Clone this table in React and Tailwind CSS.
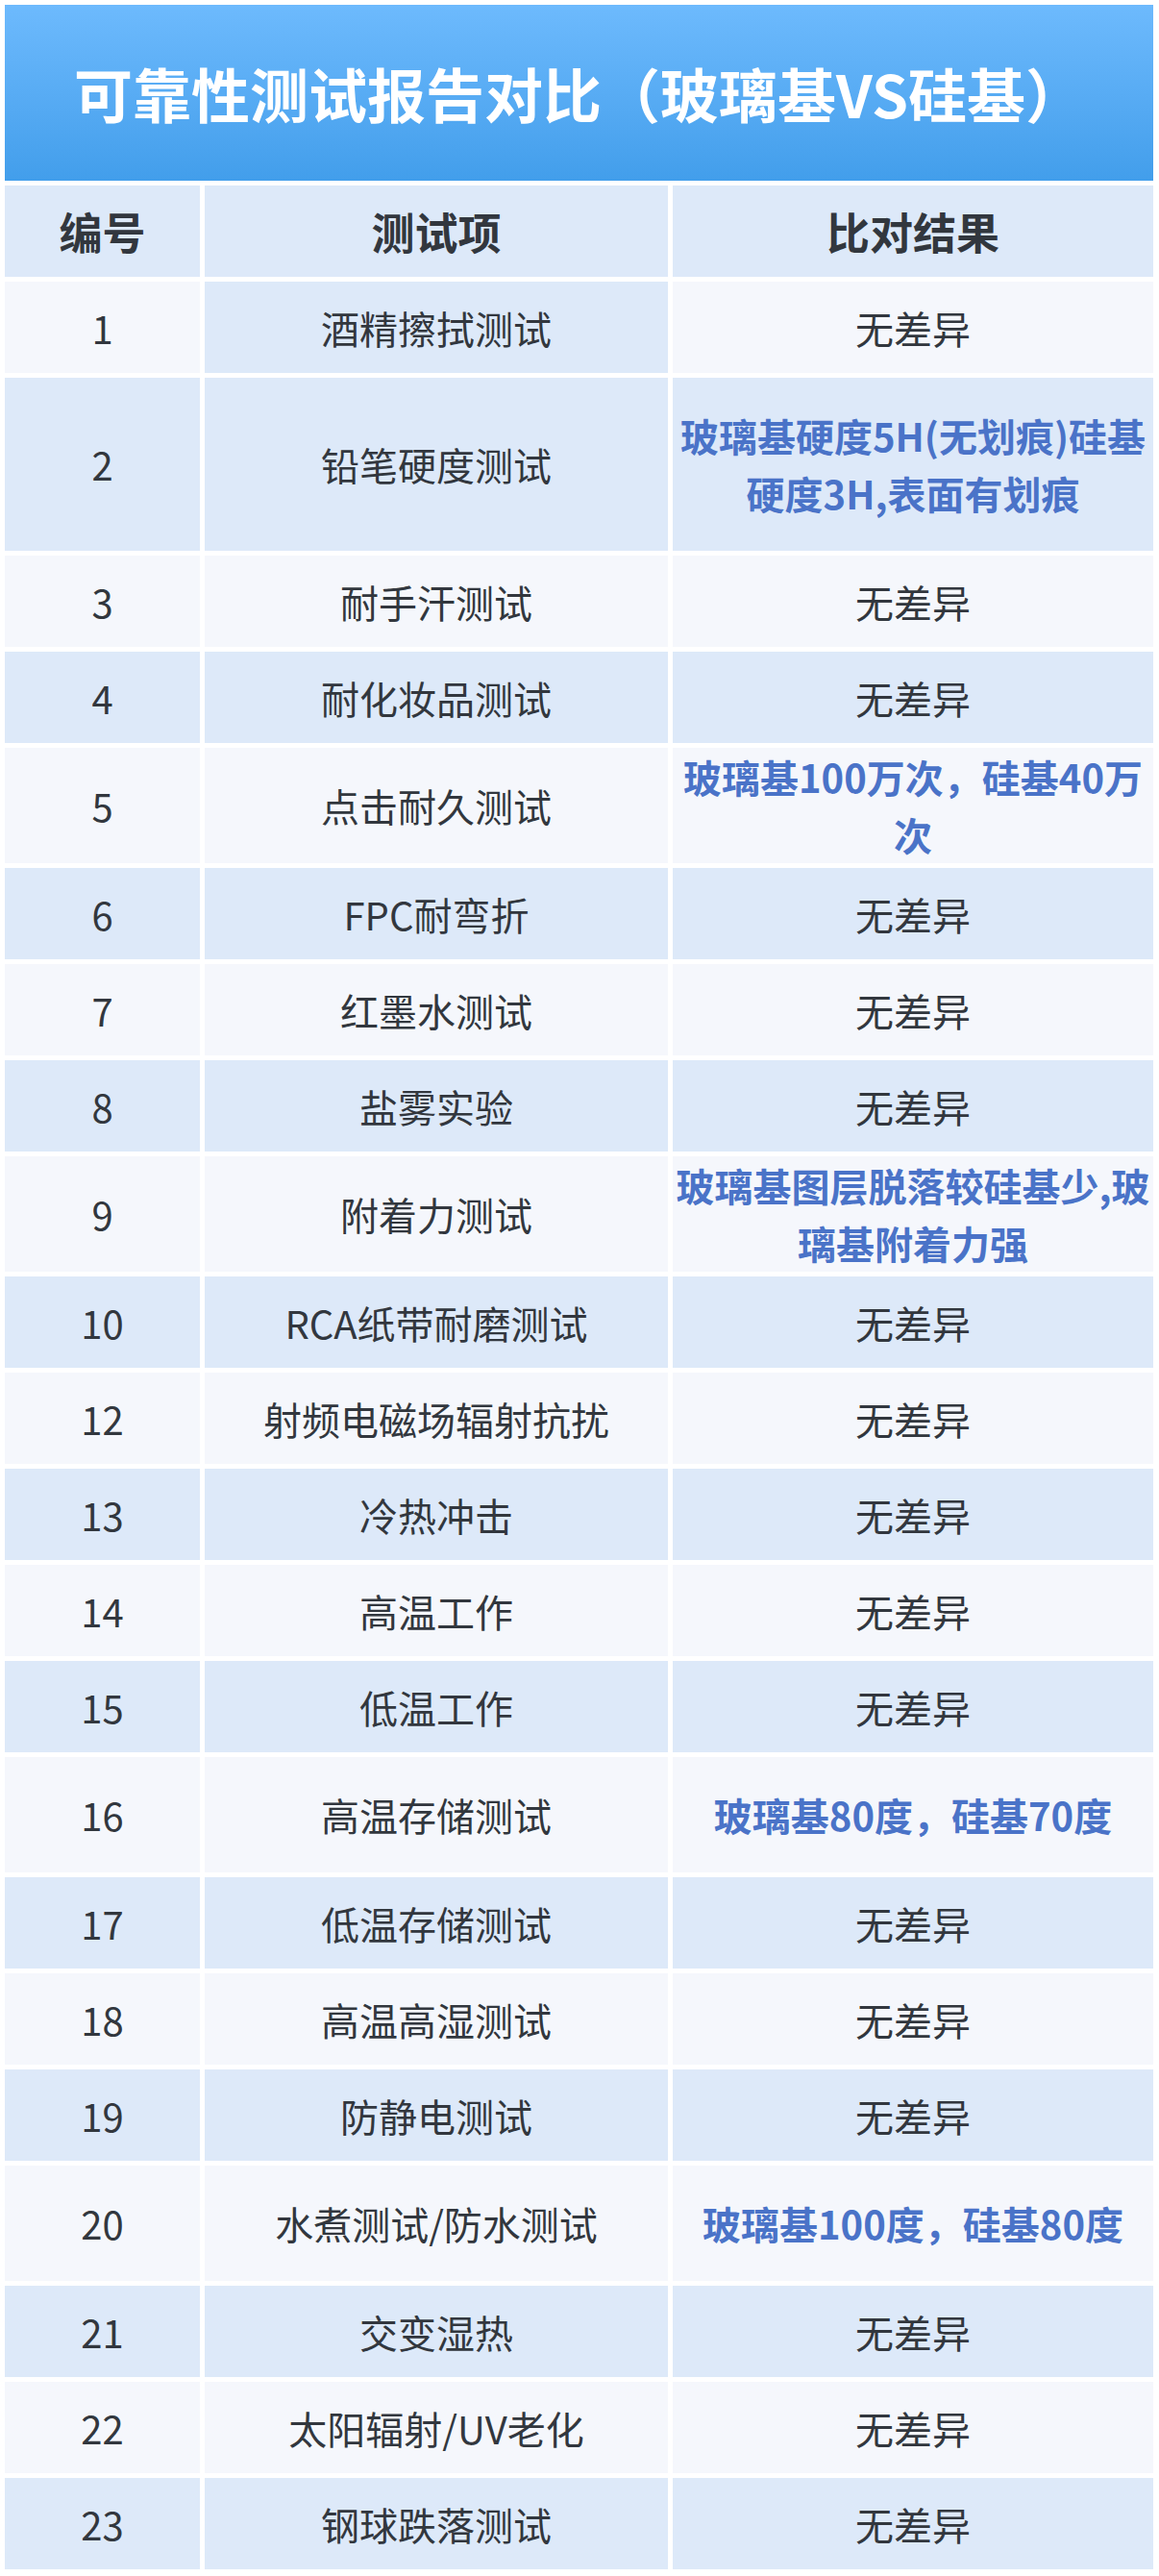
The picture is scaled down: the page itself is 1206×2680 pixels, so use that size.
const rows = [
  { n: "1", item: "酒精擦拭测试", res: ["无差异"], h: "h-[95px]", bg: "gray", midBlue: true },
  { n: "2", item: "铅笔硬度测试", res: ["玻璃基硬度5H(无划痕)硅基", "硬度3H,表面有划痕"], h: "h-[180px]", bg: "blue", hl: true },
  { n: "3", item: "耐手汗测试", res: ["无差异"], h: "h-[95px]", bg: "gray" },
  { n: "4", item: "耐化妆品测试", res: ["无差异"], h: "h-[95px]", bg: "blue" },
  { n: "5", item: "点击耐久测试", res: ["玻璃基100万次，硅基40万", "次"], h: "h-[120px]", bg: "gray", hl: true },
  { n: "6", item: "FPC耐弯折", res: ["无差异"], h: "h-[95px]", bg: "blue" },
  { n: "7", item: "红墨水测试", res: ["无差异"], h: "h-[95px]", bg: "gray" },
  { n: "8", item: "盐雾实验", res: ["无差异"], h: "h-[95px]", bg: "blue" },
  { n: "9", item: "附着力测试", res: ["玻璃基图层脱落较硅基少,玻", "璃基附着力强"], h: "h-[120px]", bg: "gray", hl: true },
  { n: "10", item: "RCA纸带耐磨测试", res: ["无差异"], h: "h-[95px]", bg: "blue" },
  { n: "12", item: "射频电磁场辐射抗扰", res: ["无差异"], h: "h-[95px]", bg: "gray" },
  { n: "13", item: "冷热冲击", res: ["无差异"], h: "h-[95px]", bg: "blue" },
  { n: "14", item: "高温工作", res: ["无差异"], h: "h-[95px]", bg: "gray" },
  { n: "15", item: "低温工作", res: ["无差异"], h: "h-[95px]", bg: "blue" },
  { n: "16", item: "高温存储测试", res: ["玻璃基80度，硅基70度"], h: "h-[120px]", bg: "gray", hl: true },
  { n: "17", item: "低温存储测试", res: ["无差异"], h: "h-[95px]", bg: "blue" },
  { n: "18", item: "高温高湿测试", res: ["无差异"], h: "h-[95px]", bg: "gray" },
  { n: "19", item: "防静电测试", res: ["无差异"], h: "h-[95px]", bg: "blue" },
  { n: "20", item: "水煮测试/防水测试", res: ["玻璃基100度，硅基80度"], h: "h-[120px]", bg: "gray", hl: true },
  { n: "21", item: "交变湿热", res: ["无差异"], h: "h-[95px]", bg: "blue" },
  { n: "22", item: "太阳辐射/UV老化", res: ["无差异"], h: "h-[95px]", bg: "gray" },
  { n: "23", item: "钢球跌落测试", res: ["无差异"], h: "h-[95px]", bg: "blue" },
];

const BLUE = "bg-[#dde9f9]";
const GRAY = "bg-[#f5f7fc]";

function Cell({ children, bg, h, className = "" }) {
  return (
    <div className={`${bg} ${h} flex flex-col items-center justify-center text-center ${className}`}>
      {children}
    </div>
  );
}

export default function App() {
  return (
    <div className="w-[1206px] min-h-[2680px] bg-white pt-[5px] pl-[5px] pr-[6px] font-['Noto_Sans_CJK_SC','Noto_Sans',sans-serif]">
      <div className="h-[183px] flex items-center justify-center bg-gradient-to-b from-[#6dbafd] to-[#429eeb]">
        <h1 className="text-white font-bold text-[61px] leading-none whitespace-nowrap">
          可靠性测试报告对比（玻璃基VS硅基）
        </h1>
      </div>
      <div className="mt-[5px] flex flex-col gap-[5px]">
        <div className="grid grid-cols-[203px_482px_500px] gap-[5px] text-[45px] font-bold text-[#32373e]">
          <Cell bg={BLUE} h="h-[95px]">编号</Cell>
          <Cell bg={BLUE} h="h-[95px]">测试项</Cell>
          <Cell bg={BLUE} h="h-[95px]">比对结果</Cell>
        </div>
        {rows.map((r) => {
          const bg = r.bg === "blue" ? BLUE : GRAY;
          return (
            <div key={r.n} className="grid grid-cols-[203px_482px_500px] gap-[5px] text-[40px] text-[#32373e]">
              <Cell bg={bg} h={r.h}>{r.n}</Cell>
              <Cell bg={r.midBlue ? BLUE : bg} h={r.h}>
                <span className="whitespace-nowrap">{r.item}</span>
              </Cell>
              <Cell bg={bg} h={r.h} className={r.hl ? "font-bold text-[#4a73c8] leading-[60px]" : ""}>
                {r.res.map((line, i) => (
                  <span key={i} className="block whitespace-nowrap">{line}</span>
                ))}
              </Cell>
            </div>
          );
        })}
      </div>
    </div>
  );
}
